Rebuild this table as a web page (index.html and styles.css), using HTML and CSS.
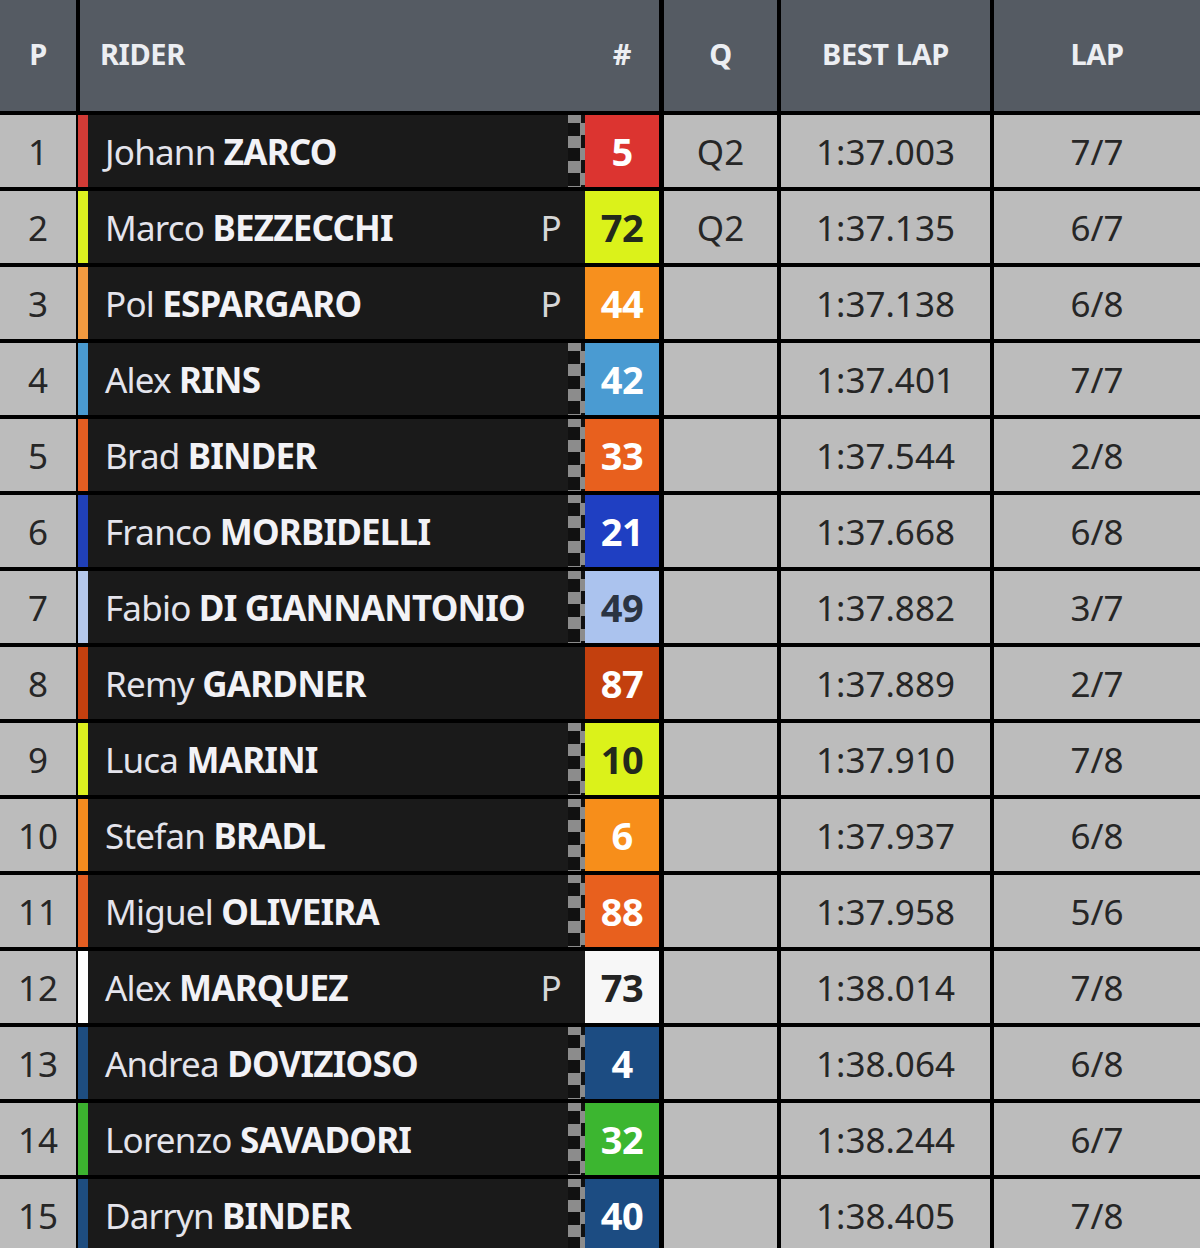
FILE: index.html
```html
<!DOCTYPE html>
<html lang="en">
<head>
<meta charset="utf-8">
<title>Timing</title>
<link rel="stylesheet" href="styles.css">
</head>
<body>
<div class="board">
  <div class="head">
    <div class="h-pos">P</div>
    <div class="h-rider"><span class="h-rider-label">RIDER</span><span class="h-num">#</span></div>
    <div class="h-q">Q</div>
    <div class="h-best">BEST LAP</div>
    <div class="h-lap">LAP</div>
  </div>

  <div class="row">
    <div class="pos">1</div><div class="stripe c-red"></div>
    <div class="rider"><span class="name"><span class="first">Johann</span> <b class="last">ZARCO</b></span><span class="flag"></span></div>
    <div class="num n-red">5</div>
    <div class="q">Q2</div><div class="best">1:37.003</div><div class="lap">7/7</div>
  </div>
  <div class="row">
    <div class="pos">2</div><div class="stripe c-lime"></div>
    <div class="rider"><span class="name"><span class="first">Marco</span> <b class="last">BEZZECCHI</b></span><span class="pit">P</span></div>
    <div class="num n-lime dark">72</div>
    <div class="q">Q2</div><div class="best">1:37.135</div><div class="lap">6/7</div>
  </div>
  <div class="row">
    <div class="pos">3</div><div class="stripe c-amber"></div>
    <div class="rider"><span class="name"><span class="first">Pol</span> <b class="last">ESPARGARO</b></span><span class="pit">P</span></div>
    <div class="num n-amber">44</div>
    <div class="q"></div><div class="best">1:37.138</div><div class="lap">6/8</div>
  </div>
  <div class="row">
    <div class="pos">4</div><div class="stripe c-sky"></div>
    <div class="rider"><span class="name"><span class="first">Alex</span> <b class="last">RINS</b></span><span class="flag"></span></div>
    <div class="num n-sky">42</div>
    <div class="q"></div><div class="best">1:37.401</div><div class="lap">7/7</div>
  </div>
  <div class="row">
    <div class="pos">5</div><div class="stripe c-ktm"></div>
    <div class="rider"><span class="name"><span class="first">Brad</span> <b class="last">BINDER</b></span><span class="flag"></span></div>
    <div class="num n-ktm">33</div>
    <div class="q"></div><div class="best">1:37.544</div><div class="lap">2/8</div>
  </div>
  <div class="row">
    <div class="pos">6</div><div class="stripe c-blue"></div>
    <div class="rider"><span class="name"><span class="first">Franco</span> <b class="last">MORBIDELLI</b></span><span class="flag"></span></div>
    <div class="num n-blue">21</div>
    <div class="q"></div><div class="best">1:37.668</div><div class="lap">6/8</div>
  </div>
  <div class="row">
    <div class="pos">7</div><div class="stripe c-lav"></div>
    <div class="rider"><span class="name"><span class="first">Fabio</span> <b class="last">DI GIANNANTONIO</b></span><span class="flag"></span></div>
    <div class="num n-lav dark">49</div>
    <div class="q"></div><div class="best">1:37.882</div><div class="lap">3/7</div>
  </div>
  <div class="row">
    <div class="pos">8</div><div class="stripe c-rust"></div>
    <div class="rider"><span class="name"><span class="first">Remy</span> <b class="last">GARDNER</b></span></div>
    <div class="num n-rust">87</div>
    <div class="q"></div><div class="best">1:37.889</div><div class="lap">2/7</div>
  </div>
  <div class="row">
    <div class="pos">9</div><div class="stripe c-lime"></div>
    <div class="rider"><span class="name"><span class="first">Luca</span> <b class="last">MARINI</b></span><span class="flag"></span></div>
    <div class="num n-lime dark">10</div>
    <div class="q"></div><div class="best">1:37.910</div><div class="lap">7/8</div>
  </div>
  <div class="row">
    <div class="pos">10</div><div class="stripe c-orange"></div>
    <div class="rider"><span class="name"><span class="first">Stefan</span> <b class="last">BRADL</b></span><span class="flag"></span></div>
    <div class="num n-orange">6</div>
    <div class="q"></div><div class="best">1:37.937</div><div class="lap">6/8</div>
  </div>
  <div class="row">
    <div class="pos">11</div><div class="stripe c-ktm"></div>
    <div class="rider"><span class="name"><span class="first">Miguel</span> <b class="last">OLIVEIRA</b></span><span class="flag"></span></div>
    <div class="num n-ktm">88</div>
    <div class="q"></div><div class="best">1:37.958</div><div class="lap">5/6</div>
  </div>
  <div class="row">
    <div class="pos">12</div><div class="stripe c-white"></div>
    <div class="rider"><span class="name"><span class="first">Alex</span> <b class="last">MARQUEZ</b></span><span class="pit">P</span></div>
    <div class="num n-white dark">73</div>
    <div class="q"></div><div class="best">1:38.014</div><div class="lap">7/8</div>
  </div>
  <div class="row">
    <div class="pos">13</div><div class="stripe c-navy"></div>
    <div class="rider"><span class="name"><span class="first">Andrea</span> <b class="last">DOVIZIOSO</b></span><span class="flag"></span></div>
    <div class="num n-navy">4</div>
    <div class="q"></div><div class="best">1:38.064</div><div class="lap">6/8</div>
  </div>
  <div class="row">
    <div class="pos">14</div><div class="stripe c-green"></div>
    <div class="rider"><span class="name"><span class="first">Lorenzo</span> <b class="last">SAVADORI</b></span><span class="flag"></span></div>
    <div class="num n-green">32</div>
    <div class="q"></div><div class="best">1:38.244</div><div class="lap">6/7</div>
  </div>
  <div class="row">
    <div class="pos">15</div><div class="stripe c-navy"></div>
    <div class="rider"><span class="name"><span class="first">Darryn</span> <b class="last">BINDER</b></span><span class="flag"></span></div>
    <div class="num n-navy">40</div>
    <div class="q"></div><div class="best">1:38.405</div><div class="lap">7/8</div>
  </div>
</div>
</body>
</html>
```
FILE: styles.css
```css
html, body {
  margin: 0;
  padding: 0;
  background: #000;
}
body {
  width: 1200px;
  height: 1248px;
  overflow: hidden;
  font-family: "Noto Sans", "Open Sans", "DejaVu Sans", sans-serif;
}
.board {
  display: flex;
  flex-direction: column;
}

/* header */
.head {
  display: flex;
  height: 111px;
  color: #eceef2;
  font-weight: 700;
  font-size: 29px;
  letter-spacing: -0.4px;
}
.head > div {
  background: #555b63;
  display: flex;
  align-items: center;
  justify-content: center;
  padding-bottom: 4px;
  box-sizing: border-box;
}
.h-pos { width: 76px; }
.h-rider {
  width: 579px;
  margin-left: 4px;
  justify-content: space-between !important;
  padding-left: 20px;
}
.h-num {
  width: 74px;
  text-align: center;
}
.h-q { width: 113px; margin-left: 5px; }
.h-best { width: 209px; margin-left: 4px; }
.h-lap { width: 206px; margin-left: 4px; }

/* rows */
.row {
  display: flex;
  height: 72px;
  margin-top: 4px;
}
.pos, .q, .best, .lap {
  background: #bcbcbc;
  color: #262626;
  font-size: 35px;
  display: flex;
  align-items: center;
  justify-content: center;
}
.pos { width: 76px; }
.stripe { width: 10px; margin-left: 2px; }
.rider {
  width: 497px;
  background: #1a1a1a;
  display: flex;
  align-items: center;
  padding-left: 17px;
  box-sizing: border-box;
  position: relative;
  color: #e4e4ec;
  font-size: 35px;
  letter-spacing: -0.8px;
}
.name { white-space: pre; }
.first { font-weight: 400; }
.last { font-weight: 700; color: #f2f2f6; }
.pit {
  position: absolute;
  right: 24px;
  top: 0;
  bottom: 0;
  display: flex;
  align-items: center;
  color: #d6d6d6;
  font-size: 35px;
}
.flag {
  position: absolute;
  right: 0;
  top: 0;
  width: 17px;
  height: 100%;
  background: repeating-conic-gradient(#8c8c8c 0 25%, #111 0 50%) 0 8px / 25px 25px;
}
.num {
  width: 74px;
  display: flex;
  align-items: center;
  justify-content: center;
  font-size: 38px;
  font-weight: 700;
  color: #fff;
  letter-spacing: -0.5px;
}
.num.dark { color: #23291c; }
.q { width: 113px; margin-left: 5px; }
.best { width: 209px; margin-left: 4px; }
.lap { width: 206px; margin-left: 4px; }

/* team colours */
.c-red { background: #d23b36; }
.n-red { background: #dc3430; }
.c-lime { background: #dcf020; }
.n-lime { background: #dbf21a; }
.c-amber { background: #f29a40; }
.n-amber { background: #f7901e; }
.c-sky { background: #4a9ad0; }
.n-sky { background: #4a9bd2; }
.c-ktm { background: #e45e22; }
.n-ktm { background: #e8601e; }
.c-blue { background: #2040b8; }
.n-blue { background: #1f3fc2; }
.c-lav { background: #b4c7ea; }
.n-lav { background: #abc3ee; }
.n-lav.dark { color: #2b3442; }
.c-rust { background: #c4400f; }
.n-rust { background: #c3400e; }
.c-orange { background: #f58c1f; }
.n-orange { background: #f78e1a; }
.c-white { background: #ffffff; }
.n-white { background: #f7f7f7; }
.n-white.dark { color: #242424; }
.c-navy { background: #1e4d80; }
.n-navy { background: #1c4c82; }
.c-green { background: #3cb22f; }
.n-green { background: #3cb630; }
```
